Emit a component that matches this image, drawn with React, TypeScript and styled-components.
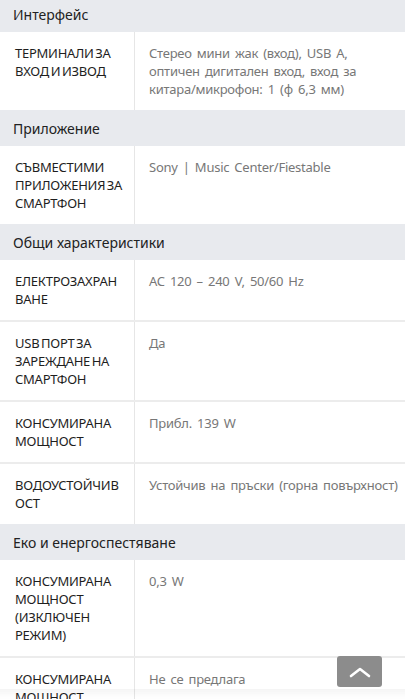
import React from "react";
import styled, { createGlobalStyle } from "styled-components";

interface SpecRow {
  label: string;
  value: string;
}

interface SpecGroup {
  title: string;
  rows: SpecRow[];
}

const groups: SpecGroup[] = [
  {
    title: "Интерфейс",
    rows: [
      {
        label: "ТЕРМИНАЛИ ЗА ВХОД И ИЗВОД",
        value:
          "Стерео мини жак (вход), USB A, оптичен дигитален вход, вход за китара/микрофон: 1 (φ 6,3 мм)",
      },
    ],
  },
  {
    title: "Приложение",
    rows: [
      {
        label: "СЪВМЕСТИМИ ПРИЛОЖЕНИЯ ЗА СМАРТФОН",
        value: "Sony | Music Center/Fiestable",
      },
    ],
  },
  {
    title: "Общи характеристики",
    rows: [
      { label: "ЕЛЕКТРОЗАХРАНВАНЕ", value: "AC 120 – 240 V, 50/60 Hz" },
      { label: "USB ПОРТ ЗА ЗАРЕЖДАНЕ НА СМАРТФОН", value: "Да" },
      { label: "КОНСУМИРАНА МОЩНОСТ", value: "Прибл. 139 W" },
      {
        label: "ВОДОУСТОЙЧИВОСТ",
        value: "Устойчив на пръски (горна повърхност)",
      },
    ],
  },
  {
    title: "Еко и енергоспестяване",
    rows: [
      { label: "КОНСУМИРАНА МОЩНОСТ (ИЗКЛЮЧЕН РЕЖИМ)", value: "0,3 W" },
      {
        label: "КОНСУМИРАНА МОЩНОСТ (РЕЖИМ НА ГОТОВНОСТ)",
        value: "Не се предлага",
      },
    ],
  },
];

export default function App() {
  return (
    <>
      <GlobalStyle />
      <Page>
        {groups.map((group) => (
          <section key={group.title}>
            <GroupTitle>{group.title}</GroupTitle>
            {group.rows.map((row) => (
              <Row key={row.label}>
                <Label>{row.label}</Label>
                <Value>{row.value}</Value>
              </Row>
            ))}
          </section>
        ))}
      </Page>
      <ToTop aria-label="Нагоре">
        <svg width="22" height="12" viewBox="0 0 22 12" fill="none">
          <path
            d="M2 10 L11 3 L20 10"
            stroke="#fff"
            strokeWidth="2.6"
            strokeLinecap="round"
            strokeLinejoin="round"
          />
        </svg>
      </ToTop>
      <BottomFade />
    </>
  );
}

const GlobalStyle = createGlobalStyle`
  html, body {
    margin: 0;
    padding: 0;
    background: #ffffff;
    overflow: hidden;
  }
  body {
    font-family: "Noto Sans", "Open Sans", Arial, sans-serif;
    -webkit-font-smoothing: antialiased;
  }
`;

const Page = styled.div`
  margin-top: -4px;
  background: #ffffff;
`;

const GroupTitle = styled.h3`
  margin: 0;
  height: 36px;
  display: flex;
  align-items: center;
  padding: 0 13px;
  background: #e8eaee;
  color: #222;
  font-size: 14px;
  font-weight: 400;
`;

const Row = styled.div`
  display: grid;
  grid-template-columns: 135px 1fr;
  border-bottom: 2px solid #ececec;

  &:last-child {
    border-bottom: none;
  }
`;

const Label = styled.div`
  padding: 12px 9px 12px 15px;
  border-right: 1px solid #e6e6e6;
  color: #1e1e1e;
  font-size: 13px;
  line-height: 18px;
  letter-spacing: -0.25px;
  word-spacing: -1.5px;
  overflow-wrap: anywhere;
`;

const Value = styled.div`
  padding: 12px 4px 12px 14px;
  color: #777;
  font-size: 13px;
  line-height: 18px;
  letter-spacing: -0.25px;
  word-spacing: 2px;
`;

const ToTop = styled.button`
  position: fixed;
  right: 23px;
  bottom: 12px;
  width: 45px;
  height: 31px;
  border: none;
  border-radius: 3px;
  background: #8c8c8c;
  display: flex;
  align-items: center;
  justify-content: center;
  padding: 0;
  cursor: pointer;
`;

const BottomFade = styled.div`
  position: fixed;
  left: 0;
  right: 0;
  bottom: 0;
  height: 10px;
  background: linear-gradient(to bottom, rgba(0, 0, 0, 0.04), rgba(255, 255, 255, 0));
  pointer-events: none;
`;
